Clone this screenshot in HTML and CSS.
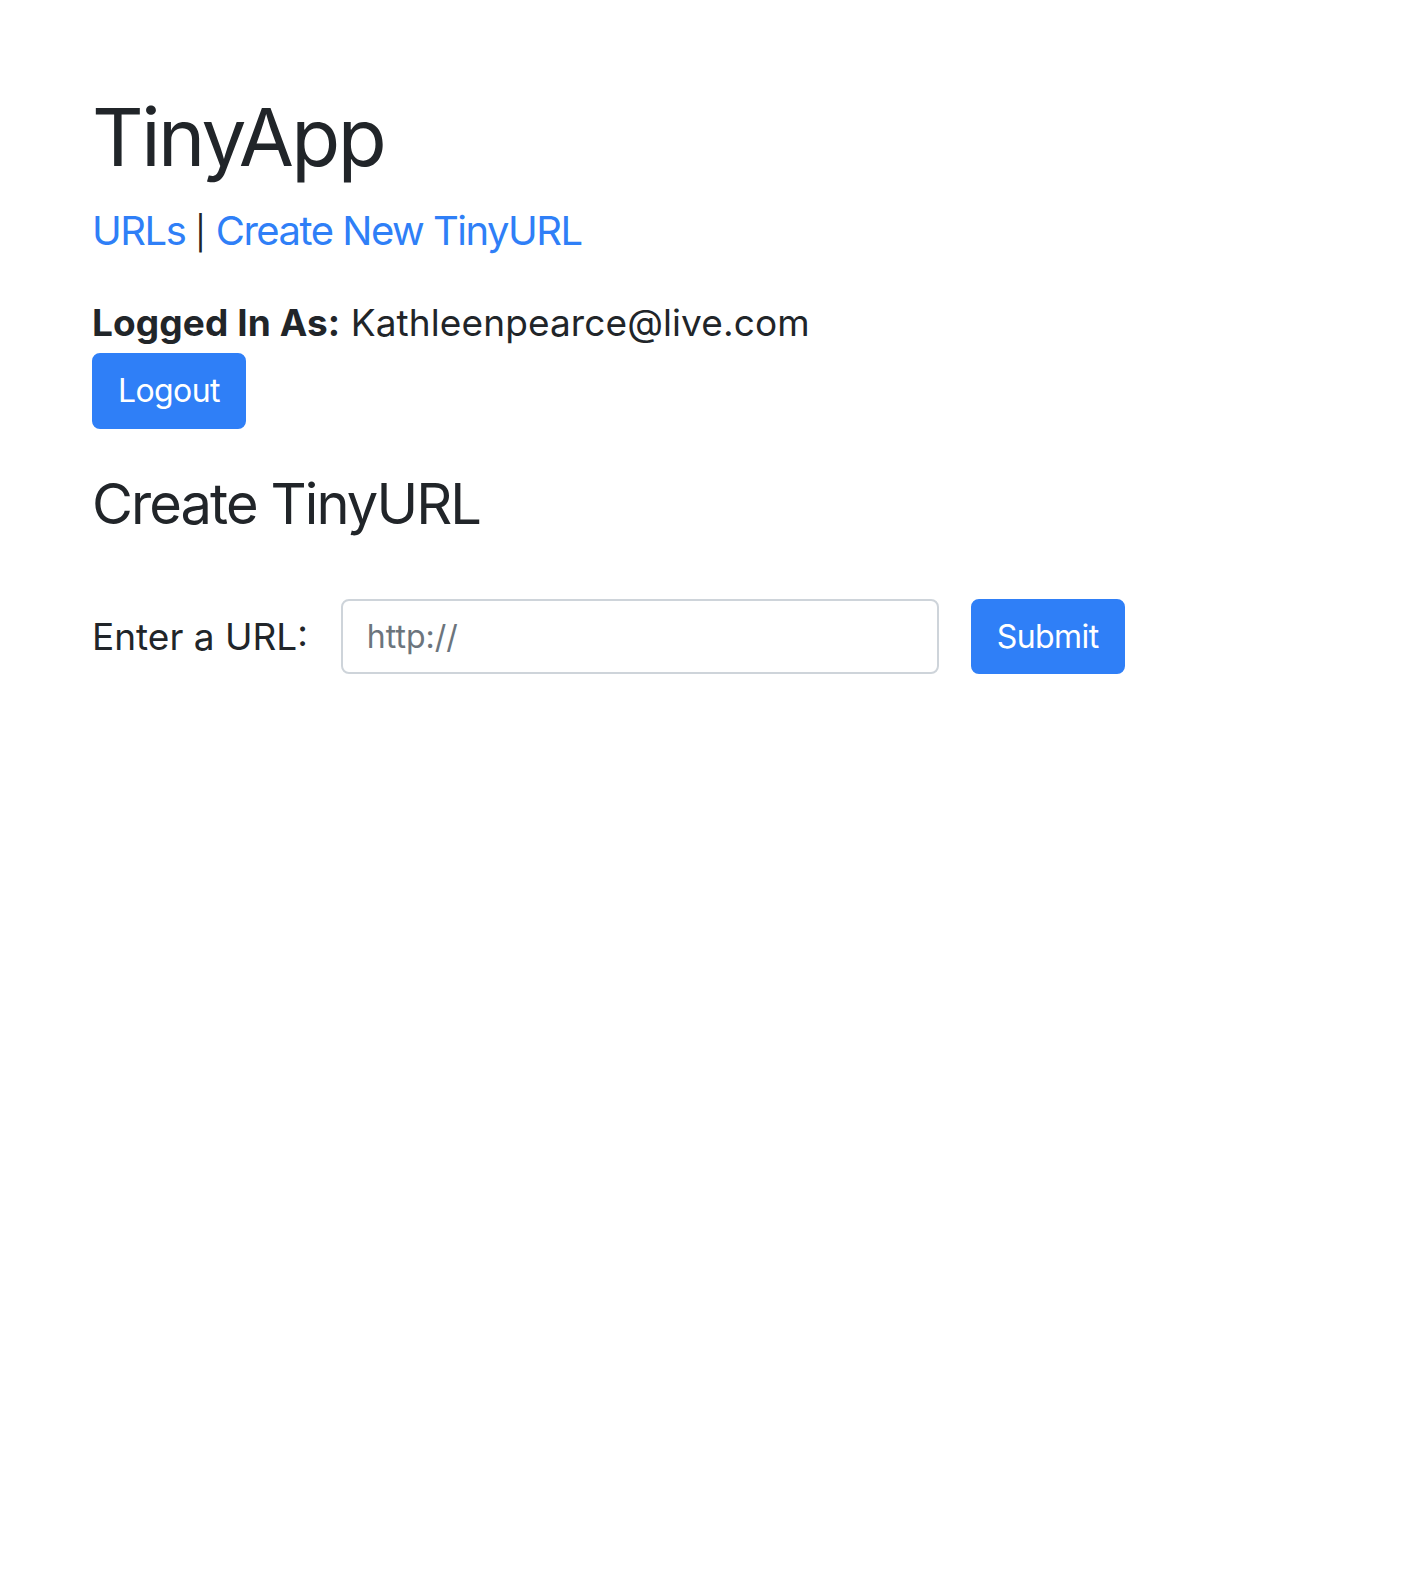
FILE: index.html
```html
<!DOCTYPE html>
<html lang="en">
<head>
<meta charset="utf-8">
<title>TinyApp</title>
<link rel="stylesheet" href="styles.css">
</head>
<body>
<main class="page">
  <h1 class="title">TinyApp</h1>
  <nav class="nav">
    <a href="#" class="nav-link">URLs</a> <span class="nav-sep">|</span> <a href="#" class="nav-link">Create New TinyURL</a>
  </nav>
  <div class="user">
    <p class="user-line"><strong>Logged In As:</strong> Kathleenpearce@live.com</p>
    <button class="btn" type="button">Logout</button>
  </div>
  <h3 class="section-title">Create TinyURL</h3>
  <form class="url-form">
    <label class="url-label" for="longURL">Enter a URL:</label>
    <input class="url-input" id="longURL" type="text" placeholder="http://">
    <button class="btn btn-submit" type="submit">Submit</button>
  </form>
</main>
</body>
</html>
```

FILE: styles.css
```css
html, body {
  margin: 0;
  padding: 0;
  background: #fff;
}
body {
  font-family: Inter, "Noto Sans", "Liberation Sans", sans-serif;
  color: #212529;
}
.page {
  padding: 89px 92px 0;
  display: flex;
  flex-direction: column;
  align-items: flex-start;
}
.title {
  margin: 0;
  font-size: 80px;
  font-weight: 400;
  line-height: 96px;
  letter-spacing: -2.5px;
}
.nav {
  margin-top: 22px;
  font-size: 40px;
  line-height: 48px;
  letter-spacing: -1.5px;
}
.nav-sep {
  font-size: 33px;
  line-height: 0;
  letter-spacing: 0;
}
.nav-link {
  color: #2f7ff7;
  text-decoration: none;
}
.user {
  margin-top: 46px;
  display: flex;
  flex-direction: column;
  align-items: flex-start;
}
.user-line {
  margin: 0 0 8px;
  font-size: 37px;
  line-height: 44px;
  letter-spacing: 0.1px;
}
.user-line strong {
  font-weight: 700;
}
.btn {
  font-family: inherit;
  font-size: 32px;
  line-height: 48px;
  letter-spacing: -0.6px;
  color: #fff;
  background: #2f7ff7;
  border: 2px solid #2f7ff7;
  border-radius: 8px;
  padding: 12px 24px;
  cursor: pointer;
}
.section-title {
  margin: 42px 0 0;
  font-size: 56px;
  font-weight: 400;
  line-height: 67px;
  letter-spacing: -1.9px;
}
.url-form {
  margin-top: 61px;
  display: flex;
  align-items: center;
}
.url-label {
  font-size: 37px;
  line-height: 44px;
  margin-right: 33px;
}
.url-input {
  width: 598px;
  height: 75px;
  box-sizing: border-box;
  border: 2px solid #ced4da;
  border-radius: 8px;
  padding: 0 24px;
  font-family: inherit;
  font-size: 32px;
  color: #495057;
}
.url-input::placeholder {
  color: #6c757d;
}
.btn-submit {
  margin-left: 32px;
  height: 75px;
  padding: 0 24px;
}
```
